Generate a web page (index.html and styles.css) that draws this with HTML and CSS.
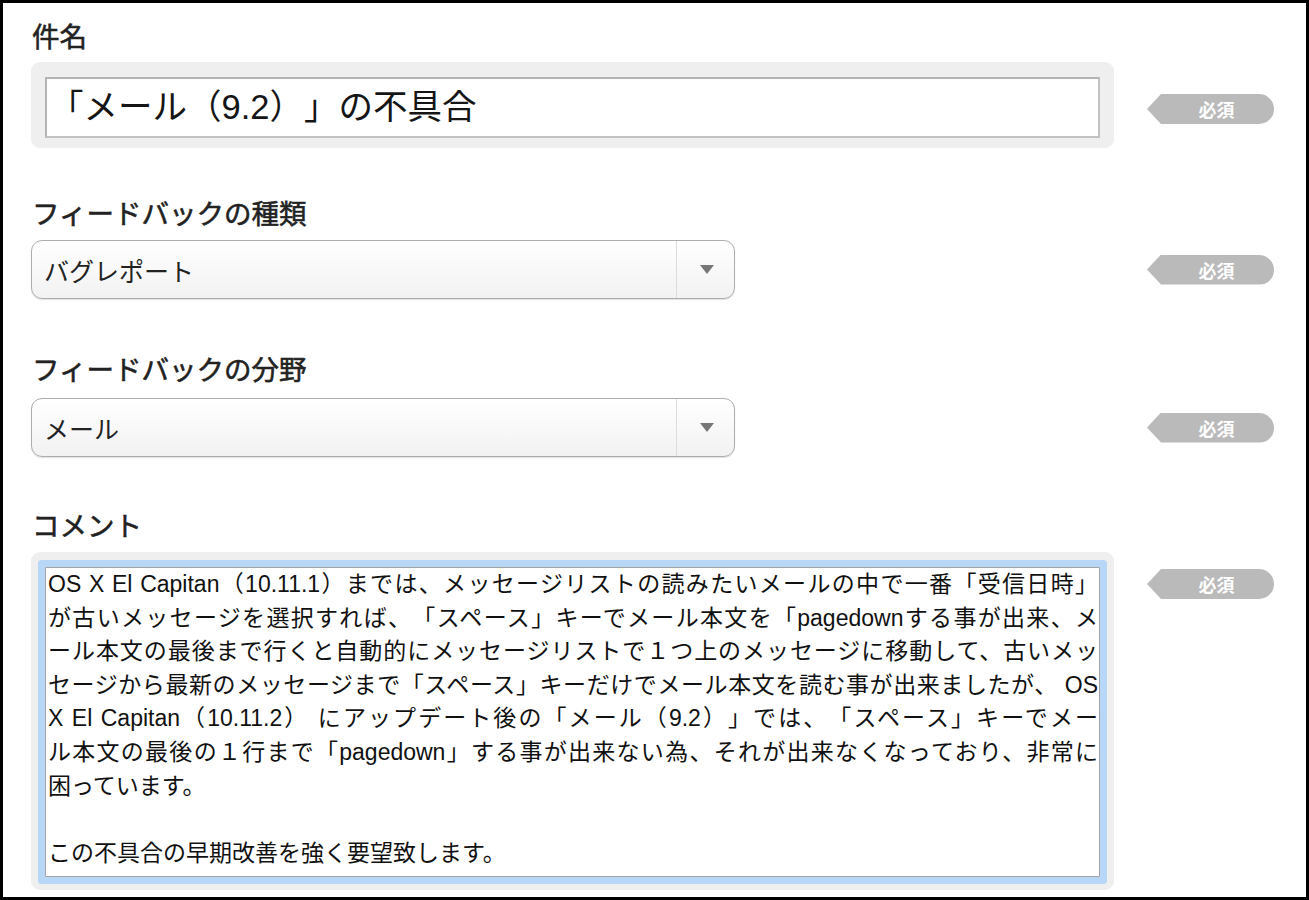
FILE: index.html
```html
<!DOCTYPE html>
<html lang="ja">
<head>
<meta charset="utf-8">
<title>フィードバック</title>
<link rel="stylesheet" href="styles.css">
</head>
<body>
<div class="frame">
  <form class="form">
    <section class="section section--subject">
      <div class="label">件名</div>
      <div class="row row--subject">
        <div class="well">
          <div class="textbox">「メール（9.2）」の不具合</div>
        </div>
        <span class="badge">必須</span>
      </div>
    </section>

    <section class="section section--select">
      <div class="label">フィードバックの種類</div>
      <div class="row row--select">
        <div class="select">
          <span class="select-value">バグレポート</span>
          <span class="select-button"><span class="caret"></span></span>
        </div>
        <span class="badge">必須</span>
      </div>
    </section>

    <section class="section section--select section--area">
      <div class="label">フィードバックの分野</div>
      <div class="row row--select">
        <div class="select">
          <span class="select-value">メール</span>
          <span class="select-button"><span class="caret"></span></span>
        </div>
        <span class="badge">必須</span>
      </div>
    </section>

    <section class="section section--comment">
      <div class="label">コメント</div>
      <div class="row row--comment">
        <div class="well well--comment">
          <div class="textarea">
            <div class="para">
              <div class="line line--full">OS X El Capitan（10.11.1）までは、メッセージリストの読みたいメールの中で一番「受信日時」</div>
              <div class="line line--full">が古いメッセージを選択すれば、「スペース」キーでメール本文を「pagedownする事が出来、メ</div>
              <div class="line line--full">ール本文の最後まで行くと自動的にメッセージリストで１つ上のメッセージに移動して、古いメッ</div>
              <div class="line line--full">セージから最新のメッセージまで「スペース」キーだけでメール本文を読む事が出来ましたが、 OS</div>
              <div class="line line--full">X El Capitan（10.11.2） にアップデート後の「メール（9.2）」では、「スペース」キーでメー</div>
              <div class="line line--full">ル本文の最後の１行まで「pagedown」する事が出来ない為、それが出来なくなっており、非常に</div>
              <div class="line">困っています。</div>
            </div>
            <div class="para">
              <div class="line">この不具合の早期改善を強く要望致します。</div>
            </div>
          </div>
        </div>
        <span class="badge">必須</span>
      </div>
    </section>
  </form>
</div>
</body>
</html>
```

FILE: styles.css
```css
html, body {
  margin: 0;
  padding: 0;
  background: #ffffff;
}

.frame {
  box-sizing: border-box;
  width: 1309px;
  height: 900px;
  border: 3px solid #000000;
  background: #ffffff;
  overflow: hidden;
  font-family: "Liberation Sans", "Noto Sans CJK JP", sans-serif;
  color: #1a1a1a;
  text-spacing-trim: space-all;
}

.form {
  padding: 17px 0 0 28px;
}

.section--subject {
  margin-bottom: 49px;
}

.section--select {
  margin-bottom: 54px;
}

.section--area {
  margin-bottom: 52px;
}

.label {
  height: 30px;
  line-height: 30px;
  font-size: 27.5px;
  font-weight: 400;
  color: #222222;
  -webkit-text-stroke: 0.55px #222222;
  padding-left: 1px;
  margin-bottom: 12px;
  font-family: "Noto Sans CJK JP", sans-serif;
}

.row {
  display: grid;
  grid-template-columns: 1083px 127px;
  column-gap: 33px;
  align-items: start;
}

.row--select {
  align-items: center;
  padding-top: 1px;
}

.section--area .row--select {
  padding-top: 3px;
}

.row--comment {
  padding-top: 1px;
}

/* grey wells around text fields */
.well {
  box-sizing: border-box;
  width: 1083px;
  background: #efefef;
  border-radius: 9px;
  padding: 15px 14px 10px 14px;
}

.well--comment {
  padding: 15px 14px 13px 14px;
}

.textbox {
  box-sizing: border-box;
  height: 61px;
  border: 2px solid #c2c2c2;
  border-top-color: #b4b4b4;
  border-left-color: #b4b4b4;
  background: #ffffff;
  padding-left: 2px;
  font-size: 34.5px;
  line-height: 56px;
  color: #151515;
  white-space: nowrap;
  overflow: hidden;
  font-family: "Liberation Sans", "Noto Sans CJK JP", sans-serif;
}

/* selects */
.select {
  box-sizing: border-box;
  width: 704px;
  height: 59px;
  display: flex;
  align-items: stretch;
  border: 1px solid #adadad;
  border-radius: 11px;
  background: linear-gradient(#ffffff, #f2f2f2);
  box-shadow: 0 1px 1px rgba(0, 0, 0, 0.12);
}

.select-value {
  flex: 1;
  display: flex;
  align-items: center;
  padding-left: 12px;
  font-size: 25px;
  color: #222222;
  font-family: "Noto Sans CJK JP", sans-serif;
}

.select-button {
  width: 57px;
  border-left: 1px solid #dcdcdc;
  display: flex;
  align-items: center;
  justify-content: center;
}

.caret {
  width: 0;
  height: 0;
  border-left: 7px solid transparent;
  border-right: 7px solid transparent;
  border-top: 9px solid #777777;
  margin-left: 2px;
}

/* required badge */
.badge {
  box-sizing: border-box;
  width: 127px;
  height: 30px;
  background: #bababa;
  border-radius: 0 15px 15px 0;
  clip-path: polygon(14px 0, 100% 0, 100% 100%, 14px 100%, 0 50%);
  padding-left: 12px;
  display: flex;
  align-items: center;
  justify-content: center;
  color: #ffffff;
  font-size: 18px;
  font-weight: 700;
  font-family: "Noto Sans CJK JP", sans-serif;
}

.row--subject .badge {
  margin-top: 32px;
}

.row--comment .badge {
  margin-top: 17px;
}

/* comment textarea */
.textarea {
  box-sizing: border-box;
  height: 310px;
  background: #ffffff;
  border: 1px solid #a3a3a3;
  border-radius: 1px;
  box-shadow: 0 0 0 7px #b8d6f6;
  padding: 0 1px 0 2px;
  font-size: 23px;
  line-height: 33.6px;
  color: #111111;
  overflow: hidden;
}

.para + .para {
  margin-top: 33.6px;
}

.line {
  white-space: nowrap;
}

.line--full {
  white-space: normal;
  text-align: justify;
  text-align-last: justify;
}
```
